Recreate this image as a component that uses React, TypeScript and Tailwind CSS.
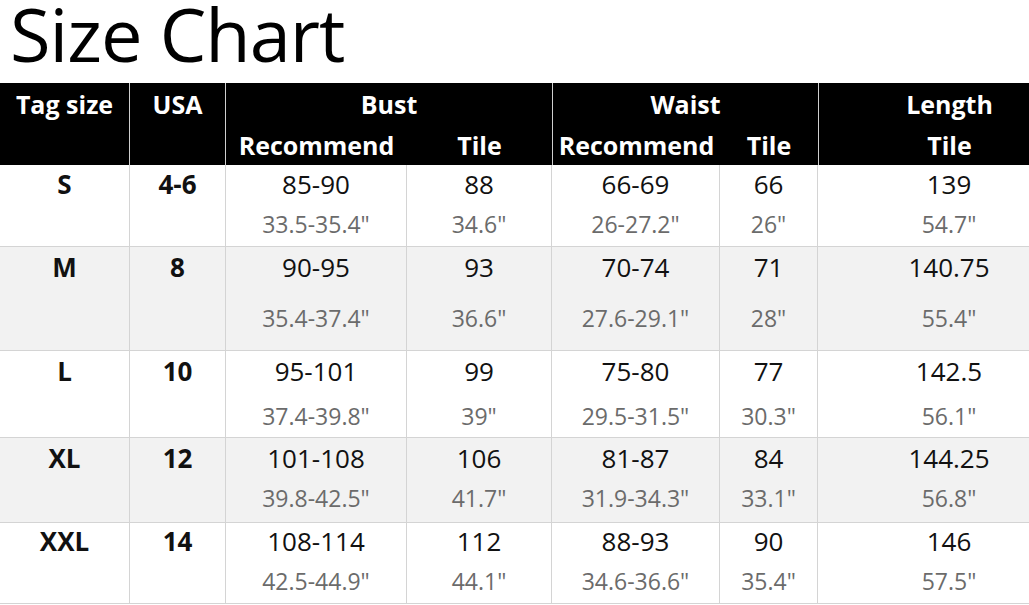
const rows = [
  {
    tag: "S",
    usa: "4-6",
    bg: "bg-white",
    h: "h-[82px]",
    pad: "pt-[3px]",
    gap: "gap-[9px]",
    cells: [
      ["85-90", '33.5-35.4"'],
      ["88", '34.6"'],
      ["66-69", '26-27.2"'],
      ["66", '26"'],
      ["139", '54.7"'],
    ],
  },
  {
    tag: "M",
    usa: "8",
    bg: "bg-[#f2f2f2]",
    h: "h-[104px]",
    pad: "pt-[4px]",
    gap: "gap-[20px]",
    cells: [
      ["90-95", '35.4-37.4"'],
      ["93", '36.6"'],
      ["70-74", '27.6-29.1"'],
      ["71", '28"'],
      ["140.75", '55.4"'],
    ],
  },
  {
    tag: "L",
    usa: "10",
    bg: "bg-white",
    h: "h-[87px]",
    pad: "pt-[4px]",
    gap: "gap-[14px]",
    cells: [
      ["95-101", '37.4-39.8"'],
      ["99", '39"'],
      ["75-80", '29.5-31.5"'],
      ["77", '30.3"'],
      ["142.5", '56.1"'],
    ],
  },
  {
    tag: "XL",
    usa: "12",
    bg: "bg-[#f2f2f2]",
    h: "h-[85px]",
    pad: "pt-[4px]",
    gap: "gap-[9px]",
    cells: [
      ["101-108", '39.8-42.5"'],
      ["106", '41.7"'],
      ["81-87", '31.9-34.3"'],
      ["84", '33.1"'],
      ["144.25", '56.8"'],
    ],
  },
  {
    tag: "XXL",
    usa: "14",
    bg: "bg-white",
    h: "h-[81px]",
    pad: "pt-[2px]",
    gap: "gap-[9px]",
    cells: [
      ["108-114", '42.5-44.9"'],
      ["112", '44.1"'],
      ["88-93", '34.6-36.6"'],
      ["90", '35.4"'],
      ["146", '57.5"'],
    ],
  },
];

const cols = "grid grid-cols-[130px_96px_181px_145px_168px_98px_211px]";

export default function App() {
  return (
    <div
      className="w-[1029px] h-[605px] overflow-hidden bg-white text-[#111]"
      style={{ fontFamily: '"Open Sans", "Noto Sans", sans-serif' }}
    >
      <h1 className="h-[83px] pl-[10px] text-[74px] leading-[68px] font-normal tracking-[-1px] text-black">
        Size Chart
      </h1>

      {/* header */}
      <div className={`${cols} grid-rows-[41px_41px] bg-black text-white font-bold text-[25px] leading-[32px]`}>
        <div className="row-span-2 border-r border-[#cfcfcf] pt-[5px] text-center">Tag size</div>
        <div className="row-span-2 border-r border-[#cfcfcf] pt-[5px] text-center">USA</div>
        <div className="col-span-2 pt-[5px] text-center">Bust</div>
        <div className="col-span-2 border-l border-[#cfcfcf] pt-[5px] text-center">Waist</div>
        <div className="border-l border-[#cfcfcf] pt-[5px] pl-[51px] text-center">Length</div>
        <div className="pt-[5px] text-center">Recommend</div>
        <div className="pt-[5px] text-center">Tile</div>
        <div className="border-l border-[#cfcfcf] pt-[5px] text-center">Recommend</div>
        <div className="pt-[5px] text-center">Tile</div>
        <div className="border-l border-[#cfcfcf] pt-[5px] pl-[51px] text-center">Tile</div>
      </div>

      {rows.map((r) => (
        <div key={r.tag} className={`${cols} ${r.h} ${r.bg} border-b border-[#d4d4d4]`}>
          <div className={`${r.pad} border-r border-[#d4d4d4] text-center text-[26px] leading-[32px] font-bold`}>
            {r.tag}
          </div>
          <div className={`${r.pad} border-r border-[#d4d4d4] text-center text-[26px] leading-[32px] font-bold`}>
            {r.usa}
          </div>
          {r.cells.map(([cm, inch], i) => (
            <div
              key={i}
              className={`${r.pad} ${r.gap} flex flex-col items-center ${
                i < 4 ? "border-r border-[#d4d4d4]" : "pl-[51px]"
              }`}
            >
              <span className="text-[26px] leading-[32px]">{cm}</span>
              <span className="text-[23px] leading-[30px] text-[#6b6b6b]">{inch}</span>
            </div>
          ))}
        </div>
      ))}
    </div>
  );
}
